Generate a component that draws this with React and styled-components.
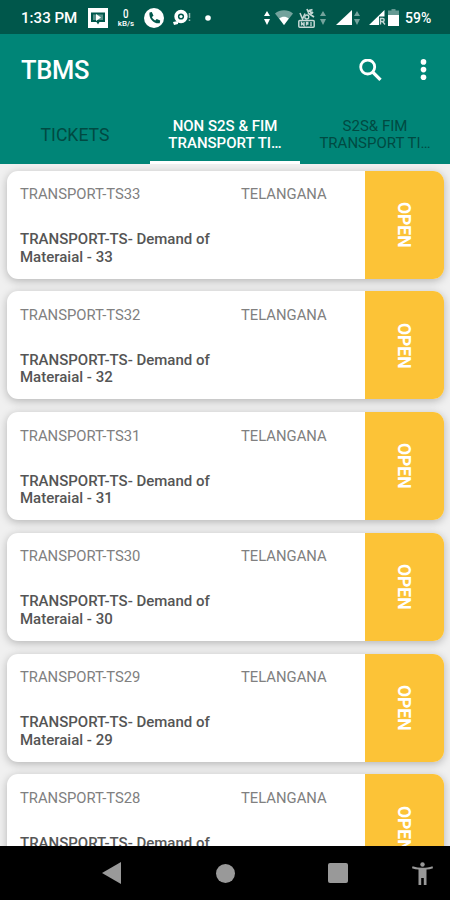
import styled, { createGlobalStyle } from "styled-components";

const GlobalStyle = createGlobalStyle`
* {
  box-sizing: border-box;
}

body {
  margin: 0;
  font-family: Roboto, "Noto Sans", sans-serif;
  background-color: #efefef;
}
`;

const Screen = styled.div`
display: flex;
flex-direction: column;
width: 450px;
height: 900px;
overflow: hidden;
`;

const StatusBar = styled.div`
display: flex;
align-items: center;
flex-shrink: 0;
height: 34px;
padding: 1px 19px 0 21px;
background-color: #00574b;
color: #fff;
font-size: 15.1px;
font-weight: 500;
white-space: nowrap;
`;

const Clock = styled.span`
width: 56px;
`;

const Battery = styled.span`
width: 26px;
margin-left: 6px;
font-size: 14px;
`;

const StatusIcon = styled.svg`
display: block;
flex-shrink: 0;
margin-left: ${(props) => props.$left}px;
opacity: ${(props) => (props.$dim ? 0.45 : 1)};
`;

const Speed = styled.div`
display: flex;
flex-direction: column;
align-items: center;
width: 18px;
margin-left: 9px;
font-size: 13px;
line-height: 13px;

& span {
  height: 12px;
  transform: scaleX(0.75);
}

& small {
  font-size: 8px;
  line-height: 9px;
}
`;

const Spacer = styled.div`
flex: 1;
`;

const AppBar = styled.header`
flex-shrink: 0;
height: 130px;
background-color: #008577;
color: #fff;
`;

const Toolbar = styled.div`
display: flex;
align-items: center;
height: 72px;
padding: 0 23px 0 21px;

& h1 {
  flex: 1;
  margin: 0;
  font-size: 25.5px;
  font-weight: 500;
  letter-spacing: -0.3px;
}
`;

const ToolbarIcon = styled.svg`
display: block;
margin-left: ${(props) => props.$left || 0}px;
`;

const Tabs = styled.nav`
display: flex;
height: 58px;
`;

const Tab = styled.div`
display: flex;
align-items: center;
justify-content: center;
width: 150px;
padding-top: ${(props) => (props.$active ? 3 : 0)}px;
border-bottom: ${(props) => (props.$active ? "3px solid #fff" : "none")};
color: ${(props) => (props.$active ? "#fff" : "#004a42")};
font-size: ${(props) => (props.$small ? 15 : 17.6)}px;
font-weight: ${(props) => (props.$active ? 500 : 400)};
line-height: 17px;
text-align: center;
white-space: pre-line;
`;

const List = styled.main`
display: flex;
flex: 1;
flex-direction: column;
gap: 12.8px;
min-height: 0;
padding: 6.5px 6px 0 7px;
overflow: hidden;
background-color: #f0f0f0;
`;

const Card = styled.article`
display: flex;
flex-shrink: 0;
height: 108px;
overflow: hidden;
border-radius: 11px;
background-color: #fff;
box-shadow: 0 2px 9px rgba(0, 0, 0, 0.25);
`;

const CardBody = styled.div`
flex: 1;
padding: 14.5px 0 0 13px;
`;

const CardTop = styled.div`
display: flex;
color: #808080;
font-size: 14.8px;
line-height: 18px;

& span:first-child {
  width: 221px;
}
`;

const Description = styled.p`
width: 205px;
margin: 28px 0 0;
color: #555;
font-size: 15px;
font-weight: 500;
line-height: 17.6px;
white-space: pre-line;
`;

const Status = styled.div`
display: flex;
align-items: center;
justify-content: center;
width: 79.5px;
background-color: #fcc337;
color: #fff;
font-size: 17.5px;
font-weight: 700;
writing-mode: vertical-rl;
`;

const NavBar = styled.footer`
display: flex;
align-items: center;
flex-shrink: 0;
height: 54px;
padding-left: 102px;
background-color: #000;
`;

const NavIcon = styled.svg`
display: block;
margin-left: ${(props) => props.$left || 0}px;
fill: #999;
`;

const tickets = [33, 32, 31, 30, 29, 28];

const DataArrows = ({ left, dim }) => (
  <StatusIcon $left={left} $dim={dim} width="6" height="14" viewBox="0 0 6 14" fill="#fff">
    <path d="M3 0 6 5H0ZM3 14 0 8h6Z" />
  </StatusIcon>
);

const StatusIcons = () => (
  <>
    <StatusIcon $left={11} width="20" height="20" viewBox="0 0 20 20">
      <path fill="#fff" d="M0 0h20v20H0Z" />
      <path fill="#00574b" d="M3 4.500h14v9.500h-5.500L10 16.500 8.500 14H3Z" />
      <path fill="#fff" fillOpacity=".35" d="M5 6.500h10v5.500H5Z" />
      <path fill="#fff" d="m8 6 5 3.500L8 13Z" />
    </StatusIcon>
    <Speed>
      <span>0</span>
      <small>kB/s</small>
    </Speed>
    <StatusIcon $left={9} width="20" height="20" viewBox="0 0 20 20">
      <circle cx="10" cy="10" r="10" fill="#fff" />
      <path
        fill="#00574b"
        d="M5.5 4.5 7.8 4l1.7 3.7-1.6 1.4c.8 1.7 1.8 2.7 3.3 3.4l1.5-1.6 3.5 1.7-.5 2.7c-6 .7-11.2-4.8-10.2-10.8Z"
      />
    </StatusIcon>
    <StatusIcon $left={9} width="18" height="17" viewBox="0 0 18 17">
      <circle cx="8" cy="7.5" r="4.900" fill="none" stroke="#fff" strokeWidth="3.600" />
      <circle cx="8" cy="7.5" r="1.600" fill="#fff" />
      <path fill="#fff" d="m0 13 5-1v3l-4 1Z" />
      <path stroke="#fff" strokeOpacity=".6" strokeWidth="1.5" d="M16.5 4v5M16.5 10.5v1.5" />
    </StatusIcon>
    <StatusIcon $left={14} width="6" height="6" viewBox="0 0 6 6">
      <circle cx="3" cy="3" r="2.8" fill="#fff" />
    </StatusIcon>
  </>
);

const SystemIcons = () => (
  <>
    <DataArrows left={0} />
    <StatusIcon $left={5} width="18" height="16" viewBox="0 0 18 16" fill="#fff">
      <path fillOpacity=".45" d="M0 3.5C5-.8 13-.8 18 3.5L9 15Z" />
      <path d="M4.2 8.5c3-2.4 6.6-2.4 9.6 0L9 15Z" />
    </StatusIcon>
    <StatusIcon $left={5} width="17" height="20" viewBox="0 0 17 20" fill="none" stroke="#c5d8d5">
      <path strokeWidth="1.5" d="m2 5 2.5 6L7 5.5" />
      <circle cx="8.8" cy="9" r="2" strokeWidth="1.3" />
      <path strokeWidth="1.8" d="m9 1 1.5 3.5M11.5 1.5l2 4M10 5l6 4M9.5 3.5l5-2M12 7l3-3" />
      <rect x=".8" y="12.5" width="15.4" height="6.7" rx="1" strokeWidth="1.5" />
      <path strokeWidth="1.3" d="M3.5 17.5V14.5l2.5 3V14M8.5 17.5v-3h2M8.5 16h2M13 14v4" />
    </StatusIcon>
    <DataArrows left={5} dim />
    <StatusIcon $left={10} width="16" height="15" viewBox="0 0 16 15" fill="#fff">
      <path d="M16 0v15H0Z" />
    </StatusIcon>
    <DataArrows left={2} dim />
    <StatusIcon $left={9} width="17" height="15" viewBox="0 0 17 15">
      <path fill="#fff" d="M15.5 0v6.5H10V15H0Z" />
      <path fill="none" stroke="#c5d8d5" strokeWidth="1.4" d="M11.5 14.5V8.5h2.2c2 0 2 3 0 3h-2.2M13.5 11.5l2.5 3" />
    </StatusIcon>
    <StatusIcon $left={2} width="11" height="17" viewBox="0 0 11 17" fill="#fff">
      <path fillOpacity=".4" d="M3.5 0h4v1.5H11V6H0V1.5h3.5Z" />
      <path d="M0 6h11v11H0Z" />
    </StatusIcon>
  </>
);

const TicketCard = ({ number }) => (
  <Card>
    <CardBody>
      <CardTop>
        <span>TRANSPORT-TS{number}</span>
        <span>TELANGANA</span>
      </CardTop>
      <Description>{`TRANSPORT-TS- Demand of\nMateraial - ${number}`}</Description>
    </CardBody>
    <Status>OPEN</Status>
  </Card>
);

const App = () => {
  return (
    <Screen>
      <GlobalStyle />
      <StatusBar>
        <Clock>1:33 PM</Clock>
        <StatusIcons />
        <Spacer />
        <SystemIcons />
        <Battery>59%</Battery>
      </StatusBar>
      <AppBar>
        <Toolbar>
          <h1>TBMS</h1>
          <ToolbarIcon width="23" height="23" viewBox="0 0 23 23" fill="none" stroke="#fff">
            <circle cx="8.7" cy="8" r="7" strokeWidth="2.8" />
            <path strokeWidth="3.3" d="m13.5 12.8 8 8" />
          </ToolbarIcon>
          <ToolbarIcon $left={38} width="7" height="22" viewBox="0 0 7 22" fill="#fff">
            <circle cx="3.5" cy="2.9" r="2.8" />
            <circle cx="3.5" cy="10.6" r="2.8" />
            <circle cx="3.5" cy="18.2" r="2.8" />
          </ToolbarIcon>
        </Toolbar>
        <Tabs>
          <Tab>TICKETS</Tab>
          <Tab $active $small>{"NON S2S & FIM\nTRANSPORT TI…"}</Tab>
          <Tab $small>{"S2S& FIM\nTRANSPORT TI…"}</Tab>
        </Tabs>
      </AppBar>
      <List>
        {tickets.map((number) => (
          <TicketCard key={number} number={number} />
        ))}
      </List>
      <NavBar>
        <NavIcon width="19" height="22" viewBox="0 0 19 22">
          <path d="M0 11 19 0v22Z" />
        </NavIcon>
        <NavIcon $left={95} width="19" height="19" viewBox="0 0 19 19">
          <circle cx="9.5" cy="9.5" r="9.5" />
        </NavIcon>
        <NavIcon $left={93} width="20" height="20" viewBox="0 0 20 20">
          <rect width="20" height="20" rx="2" />
        </NavIcon>
        <NavIcon $left={64} width="21" height="23" viewBox="0 0 21 23">
          <circle cx="10.5" cy="2.5" r="2.2" />
          <path d="M.5 4.2c6.5 2 13.5 2 20 0l.5 2c-2.3.7-4.3 1.2-6.5 1.4V23h-2.7v-7H9.2v7H6.5V7.6C4.3 7.4 2.3 6.9 0 6.2Z" />
        </NavIcon>
      </NavBar>
    </Screen>
  );
};

export default App;
